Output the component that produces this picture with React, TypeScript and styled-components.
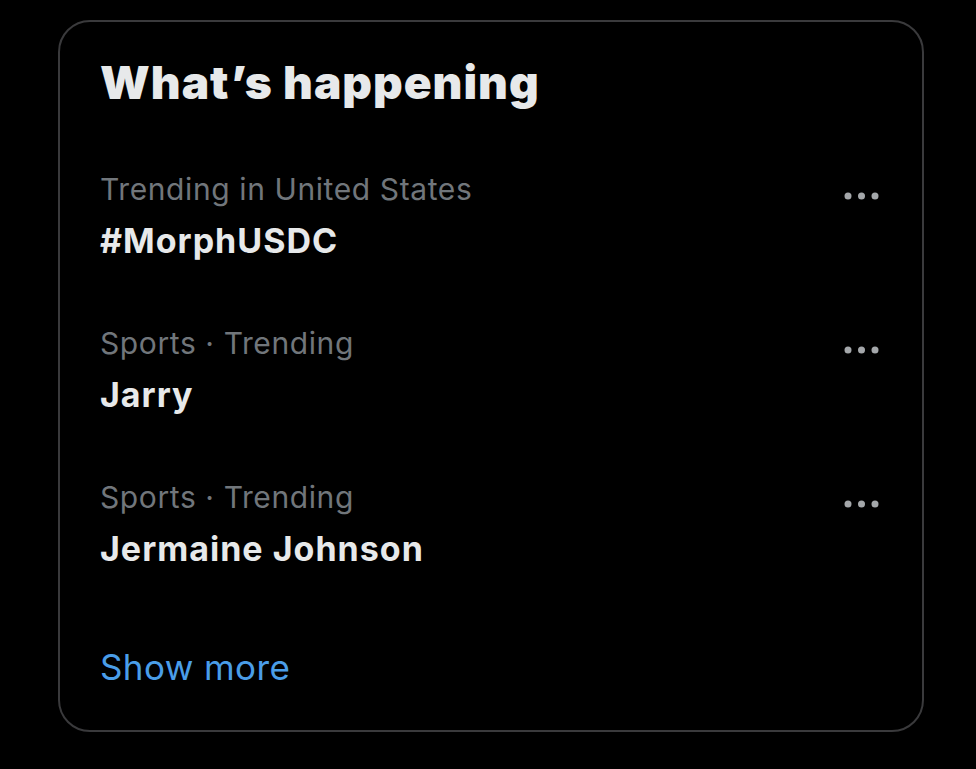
import * as React from 'react';
import styled, { createGlobalStyle } from 'styled-components';

const GlobalStyle = createGlobalStyle`
  html, body {
    margin: 0;
    padding: 0;
    background: #000;
  }
  body {
    font-family: Inter, "Noto Sans", "Liberation Sans", sans-serif;
    -webkit-font-smoothing: antialiased;
  }
`;

const Page = styled.div`
  padding: 20px 52px 36px 58px;
  background: #000;
  min-height: 769px;
  box-sizing: border-box;
`;

const Card = styled.section`
  width: 866px;
  height: 712px;
  box-sizing: border-box;
  border: 2px solid #3a3a3c;
  border-radius: 32px;
  padding: 30px 40px 0 40px;
  display: flex;
  flex-direction: column;
`;

const Title = styled.h2`
  margin: 0;
  font-size: 46px;
  line-height: 60px;
  font-weight: 900;
  color: #e7e9ea;
  letter-spacing: 1px;
`;

const List = styled.div`
  margin-top: 28px;
  display: flex;
  flex-direction: column;
`;

const Row = styled.div`
  display: flex;
  justify-content: space-between;
  align-items: flex-start;
  padding: 25px 0;
`;

const Texts = styled.div`
  display: flex;
  flex-direction: column;
`;

const Meta = styled.span`
  font-size: 30px;
  line-height: 48px;
  color: #71767b;
  font-weight: 400;
  letter-spacing: 0.6px;
`;

const Topic = styled.span`
  font-size: 34px;
  line-height: 56px;
  color: #e7e9ea;
  font-weight: 700;
  letter-spacing: 1px;
`;

const MoreButton = styled.button`
  margin-top: 21px;
  background: none;
  border: none;
  padding: 0;
  width: 40px;
  height: 20px;
  display: flex;
  cursor: pointer;
`;

const ShowMore = styled.a`
  margin-top: 39px;
  font-size: 35px;
  line-height: 52px;
  color: #4a9de8;
  letter-spacing: 0.4px;
  cursor: pointer;
`;

const trends = [
  { meta: 'Trending in United States', topic: '#MorphUSDC' },
  { meta: 'Sports · Trending', topic: 'Jarry' },
  { meta: 'Sports · Trending', topic: 'Jermaine Johnson' },
];

const Dots = () => (
  <svg width="40" height="20" viewBox="0 0 40 20">
    <circle cx="6" cy="10" r="3.5" fill="#a4a7aa" />
    <circle cx="19.5" cy="10" r="3.5" fill="#a4a7aa" />
    <circle cx="33" cy="10" r="3.5" fill="#a4a7aa" />
  </svg>
);

export default function App() {
  return (
    <>
      <GlobalStyle />
      <Page>
        <Card>
          <Title>What’s happening</Title>
          <List>
            {trends.map((t, i) => (
              <Row key={i}>
                <Texts>
                  <Meta>{t.meta}</Meta>
                  <Topic>{t.topic}</Topic>
                </Texts>
                <MoreButton aria-label="More">
                  <Dots />
                </MoreButton>
              </Row>
            ))}
          </List>
          <ShowMore>Show more</ShowMore>
        </Card>
      </Page>
    </>
  );
}
